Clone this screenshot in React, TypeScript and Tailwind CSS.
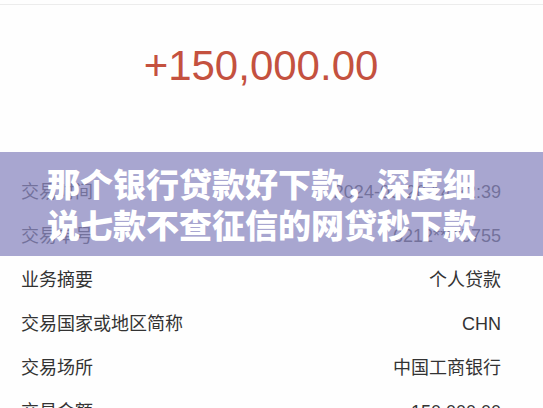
import React from "react";

const rows: [string, string][] = [
  ["交易时间", "2024-05-26 14:32:39"],
  ["交易单号", "6212****5755"],
  ["业务摘要", "个人贷款"],
  ["交易国家或地区简称", "CHN"],
  ["交易场所", "中国工商银行"],
  ["交易金额", "150,000.00"],
];

export default function App() {
  return (
    <div
      className="relative w-[543px] h-[408px] overflow-hidden bg-[#fefefe]"
      style={{ fontFamily: '"Liberation Sans", "Noto Sans CJK SC", sans-serif' }}
    >
      <div className="mt-[4px] border-t border-[#ececec]" />
      <div className="h-[165px] pt-[37px] pr-[21px]">
        <div className="text-center text-[42px] leading-[48px] text-[#c4513f]">+150,000.00</div>
      </div>
      <div className="flex flex-col">
        {rows.map(([k, v]) => (
          <div key={k} className="flex h-[44px] items-center justify-between pl-[21px] pr-[42px] text-[18px] text-[#333333]">
            <span>{k}</span>
            <span>{v}</span>
          </div>
        ))}
      </div>
      <div className="absolute left-0 right-0 top-[152px] flex h-[104px] flex-col items-center justify-center bg-[rgba(137,135,191,0.74)] pr-[20px]">
        <div
          className="text-center text-[33px] font-black leading-[41px] text-white"
          style={{ fontFamily: '"Noto Sans CJK SC", sans-serif' }}
        >
          <div>那个银行贷款好下款，深度细</div>
          <div>说七款不查征信的网贷秒下款</div>
        </div>
      </div>
    </div>
  );
}
